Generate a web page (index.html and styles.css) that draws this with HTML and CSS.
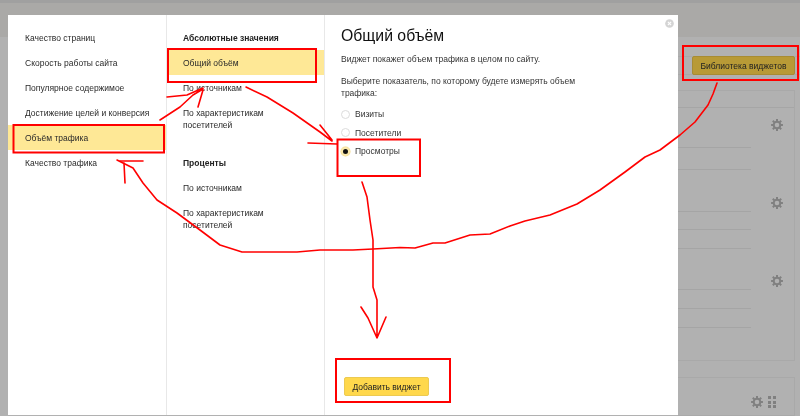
FILE: index.html
```html
<!DOCTYPE html>
<html lang="ru">
<head>
<meta charset="utf-8">
<title>Общий объём</title>
<link rel="stylesheet" href="styles.css">
</head>
<body>
<svg class="defs" width="0" height="0" aria-hidden="true">
  <symbol id="gear" viewBox="0 0 12 12">
    <circle cx="6" cy="6" r="3.3" fill="none" stroke="currentColor" stroke-width="2"/>
    <path d="M6 .1v2.2M6 9.7v2.2M.1 6h2.2M9.7 6h2.2M1.8 1.8l1.6 1.6M8.6 8.6l1.6 1.6M10.2 1.8 8.6 3.4M3.4 8.6l-1.6 1.6" stroke="currentColor" stroke-width="2" fill="none"/>
  </symbol>
</svg>
<div class="page">
  <div class="topstrip"></div>
  <div class="header"></div>
  <div class="dash">
    <div class="toolbar"><button class="lib-btn">Библиотека виджетов</button></div>
    <div class="card card-main">
      <div class="card-head"></div>
      <div class="card-body">
        <div class="rules">
          <div class="rule h40"></div>
          <div class="rule h22"></div>
          <div class="rule h42"></div>
          <div class="rule h18"></div>
          <div class="rule h19"></div>
          <div class="rule h41"></div>
          <div class="rule h19"></div>
          <div class="rule h19"></div>
        </div>
        <div class="gears">
          <svg class="gear"><use href="#gear"/></svg>
          <svg class="gear"><use href="#gear"/></svg>
          <svg class="gear"><use href="#gear"/></svg>
        </div>
      </div>
    </div>
    <div class="card card-low">
      <svg class="gear"><use href="#gear"/></svg>
      <div class="dots"><i></i><i></i><i></i><i></i><i></i><i></i></div>
    </div>
  </div>
</div>

<div class="modal">
  <nav class="col col-cats">
    <a class="item">Качество страниц</a>
    <a class="item">Скорость работы сайта</a>
    <a class="item">Популярное содержимое</a>
    <a class="item">Достижение целей и конверсия</a>
    <a class="item active">Объём трафика</a>
    <a class="item">Качество трафика</a>
  </nav>
  <nav class="col col-sub">
    <div class="item head">Абсолютные значения</div>
    <a class="item active">Общий объём</a>
    <a class="item">По источникам</a>
    <a class="item two">По характеристикам посетителей</a>
    <div class="item head">Проценты</div>
    <a class="item">По источникам</a>
    <a class="item two">По характеристикам посетителей</a>
  </nav>
  <section class="detail">
    <h1>Общий объём</h1>
    <p class="lead">Виджет покажет объем трафика в целом по сайту.</p>
    <p class="ask">Выберите показатель, по которому будете измерять объем трафика:</p>
    <div class="radios">
      <div class="radio"><span class="dot"></span>Визиты</div>
      <div class="radio"><span class="dot"></span>Посетители</div>
      <div class="radio on"><span class="dot"></span>Просмотры</div>
    </div>
    <button class="add-btn">Добавить виджет</button>
  </section>
  <svg class="close" viewBox="0 0 10 10" aria-hidden="true">
    <circle cx="5" cy="5" r="4.8" fill="#d4d4d4"/>
    <path d="M3.2 3.2l3.6 3.6M6.8 3.2 3.2 6.8" stroke="#fff" stroke-width="1.2"/>
  </svg>
</div>

<svg class="marks" viewBox="0 0 800 416" aria-hidden="true">
  <g class="box">
    <rect x="13.5" y="125" width="150.5" height="27.5"/>
    <rect x="168" y="49" width="148" height="33"/>
    <rect x="337.5" y="139.5" width="82.5" height="36.5"/>
    <rect x="683" y="46" width="115" height="34"/>
    <rect x="336" y="359" width="114" height="43"/>
  </g>
  <g class="pen">
    <path d="M717 83 713 94 708 105 695 122 680 135 660 150 645 157 625 172 600 190 577 204 550 215 525 221 510 226 490 234 470 235 445 243 433 243 415 248 400 247.5 373 249 353 250 320 250 297 252 242 252 220 245 200 230 177 213 157 200 143 183 133 168 117 160"/>
    <path d="M120 161 143 161M124 163 125 183"/>
    <path d="M160 120 180 107 193 95 203 89M167 97 187 95 203 88M203 90 198 107"/>
    <path d="M246 87 267 97 293 113 320 132 332 141M320 125 332 140M308 143 337 144"/>
    <path d="M362 182 367 197 370 220 373 240 373 287 377 300 377 338M361 307 368 318 377 338 386 317"/>
  </g>
</svg>
</body>
</html>
```
FILE: styles.css
```css
* { box-sizing: border-box; }
html, body { margin: 0; height: 100%; overflow: hidden; }
body {
  position: relative;
  width: 800px;
  height: 416px;
  background: #b1b1b1;
  font-family: "Liberation Sans", Arial, sans-serif;
  font-size: 8.5px;
  color: #222;
}
.defs { position: absolute; }
.page { height: 416px; display: flex; flex-direction: column; filter: blur(.3px); }
.topstrip { height: 3px; background: #a0a0a0; }
.header { height: 34px; background: #aaa9a7; }
.dash { flex: 1; padding-left: 678px; padding-right: 5px; display: flex; flex-direction: column; }
.toolbar {
  height: 19px;
  margin-top: 19px;
  margin-right: -5px;
  display: flex;
  border-top: 1px solid #a9a9a9;
  border-bottom: 1px solid #a9a9a9;
}
.lib-btn {
  margin: -1px 0 0 14px;
  width: 103px;
  height: 19px;
  flex: none;
  padding: 0;
  background: #b89a36;
  border: 1px solid #a88c33;
  border-radius: 2px;
  font: 8.5px "Liberation Sans", Arial, sans-serif;
  color: #222;
}
.card { border: 1px solid #a9a9a9; border-left: 0; }
.card-main { margin-top: 15px; height: 271px; }
.card-head { height: 17px; border-bottom: 1px solid #a6a6a6; }
.card-body { display: flex; }
.rules { width: 73px; }
.rule { border-bottom: 1px solid #a5a5a5; }
.h40 { height: 40px; }
.h22 { height: 22px; }
.h42 { height: 42px; }
.h18 { height: 18px; }
.h19 { height: 19px; }
.h41 { height: 41px; }
.gears { margin-left: 20px; padding-top: 11px; display: flex; flex-direction: column; gap: 66px; }
.gear { width: 12px; height: 12px; color: #808080; flex: none; display: block; }
.card-low {
  margin-top: 16px;
  flex: 1;
  display: flex;
  align-items: flex-start;
  padding: 18px 0 0 73px;
  gap: 5px;
}
.dots { display: grid; grid-template-columns: 3px 3px; gap: 1.5px 2px; }
.dots i { width: 3px; height: 3px; background: #808080; }

.modal {
  position: absolute;
  left: 8px;
  top: 15px;
  width: 670px;
  height: 400px;
  background: #fff;
  display: flex;
  filter: blur(.25px);
}
.col { flex: none; padding-top: 10px; border-right: 1px solid #e8e8e8; }
.col-cats { width: 159px; }
.col-sub { width: 158px; }
.item {
  display: flex;
  align-items: center;
  height: 25px;
  padding-left: 17px;
  color: #2a2a2a;
}
.col-sub .item { padding-left: 16px; }
.item.active { background: #fee896; }
.item.head { font-weight: bold; color: #222; }
.item.two { height: 50px; align-items: flex-start; line-height: 12px; padding-top: 7px; padding-right: 40px; }
.detail { flex: 1; padding: 11px 0 0 16px; position: relative; display: flex; flex-direction: column; align-items: flex-start; }
h1 { margin: 0; font-size: 15.8px; line-height: 20px; font-weight: normal; color: #111; }
.lead { margin: 7px 0 0; line-height: 12px; color: #333; }
.ask { margin: 10px 0 0; width: 240px; line-height: 12px; color: #333; }
.radios { margin-top: 6px; display: flex; flex-direction: column; }
.radio { height: 18.5px; display: flex; align-items: center; gap: 5px; color: #333; }
.dot { width: 9px; height: 9px; border-radius: 50%; border: 1px solid #dcdcdc; background: #fff; flex: none; }
.radio.on .dot {
  background: #111;
  border: 2.5px solid #fbe9ac;
  box-shadow: 0 0 0 .5px #f3d98a;
}
.add-btn {
  margin: auto 0 19px 3px;
  width: 85px;
  height: 19px;
  padding: 0;
  background: #ffd84c;
  border: 1px solid #ecca52;
  border-radius: 2px;
  font: 8.5px "Liberation Sans", Arial, sans-serif;
  color: #222;
}
.close { position: absolute; right: 4px; top: 4px; width: 9px; height: 9px; }
.marks { position: absolute; left: 0; top: 0; width: 800px; height: 416px; pointer-events: none; }
.box rect { fill: none; stroke: #f00; stroke-width: 2; }
.pen path { fill: none; stroke: #f00; stroke-width: 1.6; stroke-linejoin: round; stroke-linecap: round; }
```
